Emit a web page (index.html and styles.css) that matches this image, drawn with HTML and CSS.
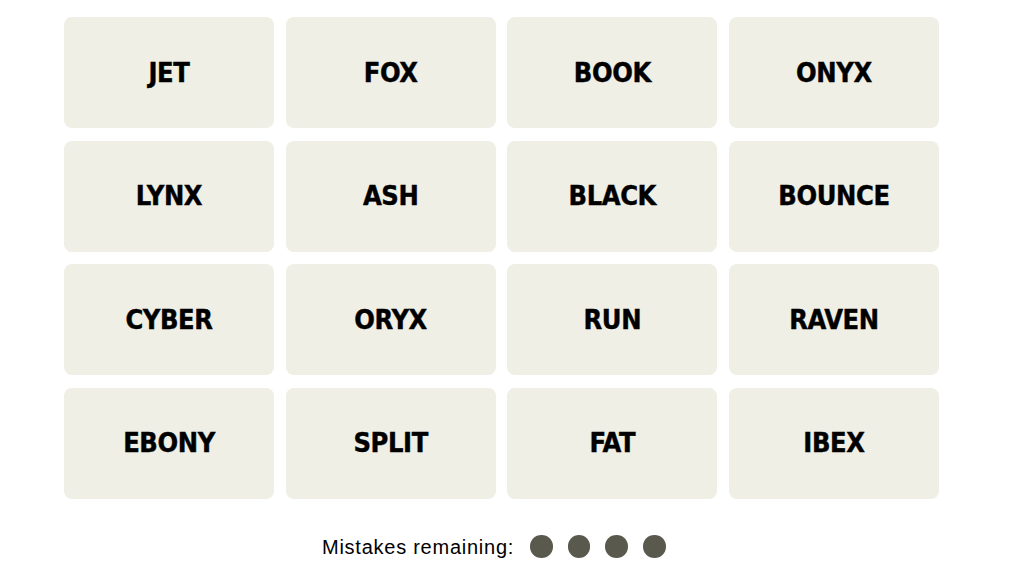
FILE: index.html
```html
<!DOCTYPE html>
<html>
<head>
<meta charset="utf-8">
<link rel="stylesheet" href="styles.css">
</head>
<body>
<main class="game">
  <div class="board">
    <div class="tile">JET</div>
    <div class="tile">FOX</div>
    <div class="tile">BOOK</div>
    <div class="tile">ONYX</div>
    <div class="tile">LYNX</div>
    <div class="tile">ASH</div>
    <div class="tile">BLACK</div>
    <div class="tile">BOUNCE</div>
    <div class="tile">CYBER</div>
    <div class="tile">ORYX</div>
    <div class="tile">RUN</div>
    <div class="tile">RAVEN</div>
    <div class="tile">EBONY</div>
    <div class="tile">SPLIT</div>
    <div class="tile">FAT</div>
    <div class="tile">IBEX</div>
  </div>
  <div class="mistakes">
    <span class="mistakes-label">Mistakes remaining:</span>
    <div class="dots">
      <span class="dot"></span>
      <span class="dot"></span>
      <span class="dot"></span>
      <span class="dot"></span>
    </div>
  </div>
</main>
</body>
</html>
```
FILE: styles.css
```css
html, body {
  margin: 0;
  padding: 0;
  background: #ffffff;
}

.game {
  padding: 17px 0 0 64px;
  width: 875px;
}

.board {
  display: grid;
  grid-template-columns: repeat(4, 210px);
  grid-template-rows: repeat(4, 111px);
  column-gap: 11.67px;
  row-gap: 12.67px;
}

.tile {
  background: #efefe6;
  border-radius: 8px;
  display: flex;
  align-items: center;
  justify-content: center;
  font-family: "DejaVu Sans Condensed", "DejaVu Sans", sans-serif;
  font-stretch: condensed;
  font-weight: 700;
  font-size: 27px;
  letter-spacing: -0.4px;
  -webkit-text-stroke: 0.4px #000000;
  color: #000000;
  padding-bottom: 1px;
  box-sizing: border-box;
}

.mistakes {
  display: flex;
  align-items: center;
  margin-top: 36px;
  padding-left: 258px;
  height: 23px;
}

.mistakes-label {
  font-family: "Liberation Sans", Arial, sans-serif;
  font-size: 20px;
  letter-spacing: 0.75px;
  color: #000000;
  margin-right: 16px;
  padding-top: 2px;
}

.dots {
  display: flex;
  gap: 15px;
}

.dot {
  width: 22.7px;
  height: 22.7px;
  border-radius: 50%;
  background: #5a594e;
}
```
